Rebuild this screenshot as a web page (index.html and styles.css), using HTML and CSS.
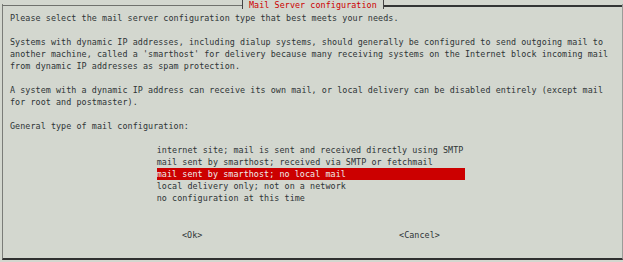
FILE: index.html
```html
<!DOCTYPE html>
<html lang="en"><head><meta http-equiv="Content-Type" content="text/html; charset=UTF-8">
  <title>Mail Server configuration</title>
<link rel="stylesheet" href="styles.css"></head>

<body>
<div class="dialog">
  <div class="titlebar">
    <span class="rule rule-left"></span>
    <span class="tick"></span>
    <span class="title">Mail Server configuration</span>
    <span class="tick"></span>
    <span class="rule rule-right"></span>
  </div>
  <div class="content">
    <p class="txt">Please select the mail server configuration type that best meets your needs.</p>
    <p class="txt">Systems with dynamic IP addresses, including dialup systems, should generally be configured to send outgoing mail to
another machine, called a 'smarthost' for delivery because many receiving systems on the Internet block incoming mail
from dynamic IP addresses as spam protection.</p>
    <p class="txt">A system with a dynamic IP address can receive its own mail, or local delivery can be disabled entirely (except mail
for root and postmaster).</p>
    <p class="txt">General type of mail configuration:</p>
    <ul class="menu">
      <li>internet site; mail is sent and received directly using SMTP</li>
      <li>mail sent by smarthost; received via SMTP or fetchmail</li>
      <li class="active">mail sent by smarthost; no local mail</li>
      <li>local delivery only; not on a network</li>
      <li>no configuration at this time</li>
    </ul>
    <div class="buttons">
      <span class="btn">&lt;Ok&gt;</span>
      <span class="btn">&lt;Cancel&gt;</span>
    </div>
  </div>
</div>
</body></html>
```

FILE: styles.css
```css
html,body{
  width: 100%;
  height: 100%;
  margin: 0;
  padding: 0;
  overflow: hidden;
}
body{
  background-color: #d3d7cf;
  color: #2e3436;
  font-family: "DejaVu Sans Mono", "Liberation Mono", monospace;
  font-size: 8.4px;
  line-height: 12.06px;
  letter-spacing: 0.07px;
}
.dialog{
  box-sizing: border-box;
  margin: 4px 0 0 2px;
  height: 256px;
  border-left: 1px solid #7a7c78;
  border-right: 1px solid #9a9c98;
  border-bottom: 2px solid #2f3030;
  display: flex;
  flex-direction: column;
}
.titlebar{
  display: flex;
  align-items: center;
  height: 12px;
  margin-top: -4.5px;
  margin-left: -1px;
}
.rule{
  height: 0;
}
.rule-left{
  width: 240px;
  border-top: 1px solid #6f716d;
}
.rule-right{
  flex: 1;
  border-top: 2px solid #333535;
}
.tick{
  align-self: flex-start;
  width: 1px;
  height: 9px;
  background-color: #444;
}
.title{
  color: #cc0000;
  white-space: pre;
  margin: 0 6px 0 6px;
}
.content{
  padding-left: 7px;
}
.txt{
  margin: 0 0 12.06px 0;
  white-space: pre;
}
.menu{
  list-style: none;
  margin: 0 0 0 29.1ch;
  padding: 0;
}
.menu li{
  width: 61.2ch;
  white-space: pre;
}
.menu .active{
  background-color: #cc0000;
  color: #eeeeec;
}
.buttons{
  display: flex;
  gap: 39ch;
  padding-left: 34.1ch;
  margin-top: 24.12px;
}
.btn{
  white-space: pre;
}
```
